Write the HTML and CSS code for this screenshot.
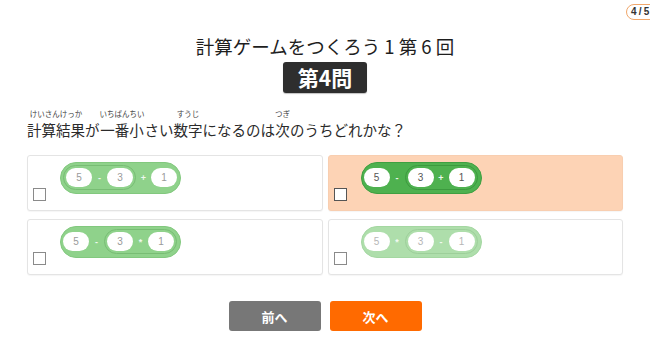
FILE: index.html
```html
<!DOCTYPE html>
<html lang="ja">
<head>
<meta charset="utf-8">
<title>計算ゲームをつくろう</title>
<link rel="stylesheet" href="styles.css">
</head>
<body>
<div class="pager">4 / 5</div>
<main class="page">
  <h1 class="title">計算ゲームをつくろう 1 第 6 回</h1>
  <div class="badge">第4問</div>
  <p class="question"><span class="rb"><span class="rt">けいさんけっか</span><span class="base">計算結果</span></span>が<span class="rb"><span class="rt">いちばんちい</span><span class="base">一番小</span></span>さい<span class="rb"><span class="rt">すうじ</span><span class="base">数字</span></span>になるのは<span class="rb"><span class="rt">つぎ</span><span class="base">次</span></span>のうちどれかな？</p>
  <div class="choices">
    <div class="card">
      <span class="check"></span>
      <div class="blk">
        <div class="grp"><span class="num">5</span><span class="op">-</span><span class="num">3</span></div>
        <span class="op">+</span><span class="num">1</span>
      </div>
    </div>
    <div class="card selected">
      <span class="check"></span>
      <div class="blk">
        <span class="num">5</span><span class="op">-</span>
        <div class="grp"><span class="num">3</span><span class="op">+</span><span class="num">1</span></div>
      </div>
    </div>
    <div class="card">
      <span class="check"></span>
      <div class="blk">
        <span class="num">5</span><span class="op">-</span>
        <div class="grp"><span class="num">3</span><span class="op">*</span><span class="num">1</span></div>
      </div>
    </div>
    <div class="card">
      <span class="check"></span>
      <div class="blk faded">
        <span class="num">5</span><span class="op">*</span>
        <div class="grp"><span class="num">3</span><span class="op">-</span><span class="num">1</span></div>
      </div>
    </div>
  </div>
  <div class="nav">
    <button class="btn prev">前へ</button>
    <button class="btn next">次へ</button>
  </div>
</main>
</body>
</html>
```
FILE: styles.css
```css
html, body {
  margin: 0;
  padding: 0;
  background: #ffffff;
}
body {
  font-family: "Noto Sans CJK JP", "Noto Sans", sans-serif;
  color: #2b2b2b;
  position: relative;
  width: 650px;
  height: 347px;
  overflow: hidden;
}
.pager {
  position: absolute;
  top: 4px;
  left: 626px;
  width: 34px;
  height: 14px;
  border: 1px solid #f0a76b;
  border-radius: 9px;
  background: #fff;
  font-family: "Liberation Sans", sans-serif;
  font-weight: bold;
  font-size: 10px;
  line-height: 14px;
  color: #333;
  padding-left: 4px;
  letter-spacing: -0.3px;
}
.page {
  display: flex;
  flex-direction: column;
  align-items: center;
  padding-top: 34px;
}
.title {
  margin: 0;
  font-size: 18.5px;
  font-weight: 400;
  line-height: 24px;
  color: #1e1e1e;
  white-space: nowrap;
}
.badge {
  margin-top: 4px;
  width: 84px;
  height: 31px;
  background: #2e2e2e;
  border-radius: 3px;
  color: #fff;
  display: flex;
  align-items: center;
  justify-content: center;
  font-size: 21px;
  font-weight: bold;
  line-height: 1;
  box-shadow: 0 1px 1px rgba(0,0,0,0.25);
}
.question {
  align-self: stretch;
  margin: 15px 0 0 27px;
  font-size: 14.5px;
  line-height: 22px;
  color: #2b2b2b;
  white-space: nowrap;
}
.rb {
  display: inline-flex;
  flex-direction: column;
  align-items: center;
  vertical-align: bottom;
}
.rt {
  font-size: 7.5px;
  line-height: 11px;
  color: #444;
  white-space: nowrap;
}
.base {
  line-height: 22px;
}
.choices {
  align-self: stretch;
  margin: 14px 27px 0;
  display: grid;
  grid-template-columns: 1fr 1fr;
  column-gap: 5px;
  row-gap: 8px;
}
.card {
  box-sizing: border-box;
  min-height: 56px;
  border: 1px solid #e4e4e4;
  border-radius: 3px;
  background: #fff;
  padding: 6px 5px 9px;
  display: flex;
  align-items: flex-start;
  gap: 14px;
  box-shadow: 0 1px 1px rgba(0,0,0,0.04);
}
.card.selected {
  background: #fdd3b5;
  border-color: #f8ceb0;
}
.check {
  align-self: flex-end;
  width: 11px;
  height: 11px;
  border: 1px solid #8a8a8a;
  background: #fff;
  flex: none;
}
.selected .check {
  border-color: #555;
}
.blk {
  display: inline-flex;
  align-items: center;
  padding: 2px 3px 3px 2px;
  border: 1px solid #82c87e;
  border-radius: 17px;
  background: #8fd28b;
}
.grp {
  display: inline-flex;
  align-items: center;
  padding: 2px;
  border: 1px solid #78bd74;
  border-radius: 14px;
}
.num {
  width: 26px;
  height: 19px;
  border-radius: 10px;
  background: #fff;
  display: flex;
  align-items: center;
  justify-content: center;
  font-family: "Liberation Sans", sans-serif;
  font-size: 10px;
  color: #9a9a9a;
}
.op {
  width: 15px;
  text-align: center;
  font-family: "Liberation Sans", sans-serif;
  font-size: 9px;
  font-weight: bold;
  color: #eef8ee;
}
.selected .blk {
  background: #4eb14f;
  border-color: #3f9f41;
}
.selected .grp {
  border-color: #3c9a3e;
}
.selected .num {
  color: #555;
}
.blk.faded {
  opacity: 0.72;
}
.nav {
  margin-top: 26px;
  display: flex;
  gap: 9px;
}
.btn {
  width: 92px;
  height: 30px;
  border: none;
  border-radius: 3px;
  color: #fff;
  font-family: "Noto Sans CJK JP", sans-serif;
  font-weight: bold;
  font-size: 13px;
  padding: 0;
}
.btn.prev {
  background: #777777;
}
.btn.next {
  background: #ff6a00;
}
```
